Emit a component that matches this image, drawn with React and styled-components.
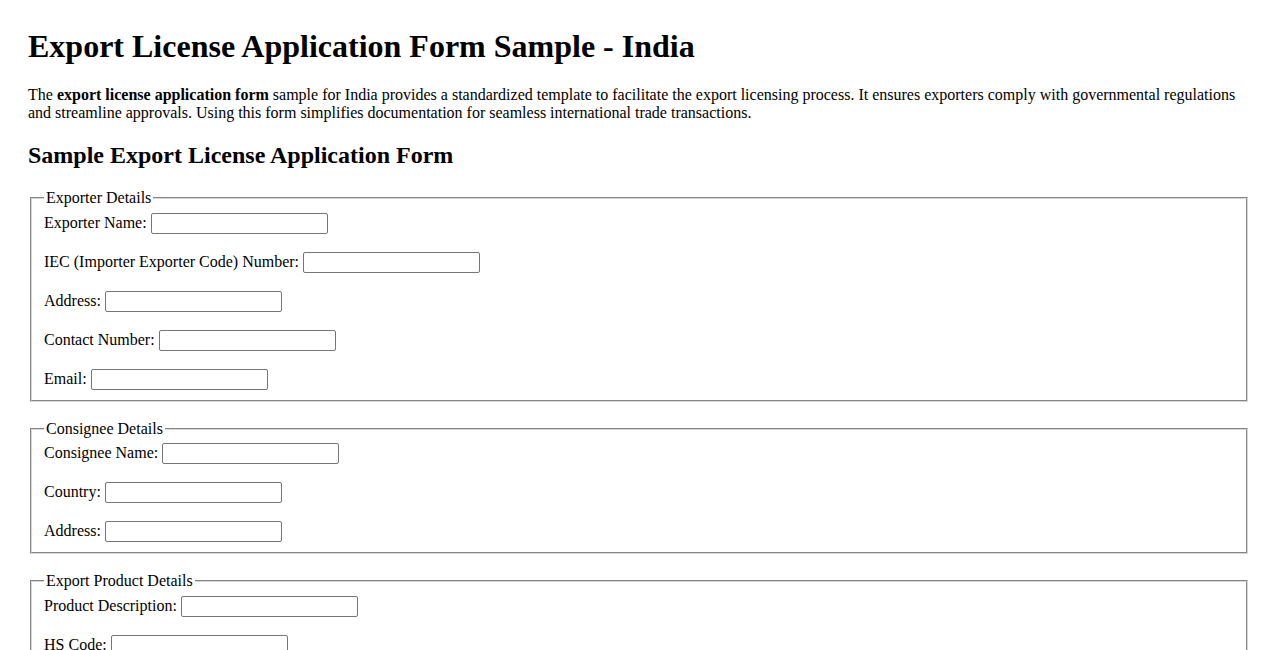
import React from "react";
import styled, { createGlobalStyle } from "styled-components";

const GlobalStyle = createGlobalStyle`
  html, body {
    margin: 0;
    padding: 0;
    background: #ffffff;
  }
  body {
    font-family: "Liberation Serif", "Times New Roman", serif;
    font-size: 16px;
    color: #000000;
  }
`;

const Page = styled.div`
  padding: 28px 28px;
`;

const Title = styled.h1`
  font-size: 32px;
  font-weight: bold;
  margin: 0 0 21.44px;
`;

const Intro = styled.p`
  margin: 17px 0 15px;
  line-height: normal;
`;

const SubTitle = styled.h2`
  font-size: 24px;
  font-weight: bold;
  margin: 19.92px 0;
`;

const Form = styled.form`
  margin: 0;
`;

const Fieldset = styled.fieldset`
  margin: 0 2px 18px;
  padding: 0.35em 0.75em 0.625em;
  border: 2px groove #d8d8d8;
  min-width: min-content;
`;

const Legend = styled.legend`
  padding: 0 2px;
`;

const Row = styled.div`
  margin-bottom: 18px;

  &:last-child {
    margin-bottom: 0;
  }
`;

const Label = styled.label`
  font-size: 16px;
`;

const TextInput = styled.input`
  box-sizing: border-box;
  width: 177px;
  height: 21px;
  margin: 0;
  padding: 1px 2px;
  border: 1px solid #767676;
  border-radius: 2px;
  font: 13.333px "Liberation Sans", Arial, sans-serif;
  vertical-align: baseline;
  background: #ffffff;
`;

const sections = [
  {
    legend: "Exporter Details",
    fields: [
      "Exporter Name",
      "IEC (Importer Exporter Code) Number",
      "Address",
      "Contact Number",
      "Email",
    ],
  },
  {
    legend: "Consignee Details",
    fields: ["Consignee Name", "Country", "Address"],
  },
  {
    legend: "Export Product Details",
    fields: [
      "Product Description",
      "HS Code",
      "Quantity",
      "Value (INR)",
      "Port of Export",
    ],
  },
];

export default function App() {
  return (
    <Page>
      <GlobalStyle />
      <Title>Export License Application Form Sample - India</Title>
      <Intro>
        The <strong>export license application form</strong> sample for India
        provides a standardized template to facilitate the export licensing
        process. It ensures exporters comply with governmental regulations and
        streamline approvals. Using this form simplifies documentation for
        seamless international trade transactions.
      </Intro>
      <SubTitle>Sample Export License Application Form</SubTitle>
      <Form onSubmit={(e) => e.preventDefault()}>
        {sections.map((section) => (
          <Fieldset key={section.legend}>
            <Legend>{section.legend}</Legend>
            {section.fields.map((field) => (
              <Row key={field}>
                <Label>{field}:</Label> <TextInput type="text" />
              </Row>
            ))}
          </Fieldset>
        ))}
      </Form>
    </Page>
  );
}
